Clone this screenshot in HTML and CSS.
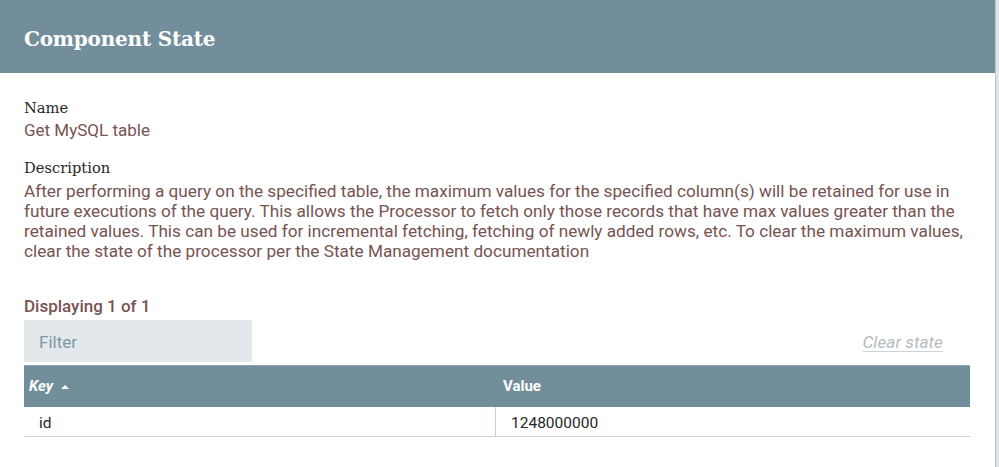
FILE: index.html
```html
<!DOCTYPE html>
<html>
<head>
<meta charset="utf-8">
<link rel="stylesheet" href="styles.css">
</head>
<body>
<div class="page">
  <div class="dialog">
    <div class="dialog-header">
      <span class="dialog-title">Component State</span>
    </div>
    <div class="dialog-content">
      <div class="setting">
        <div class="setting-name">Name</div>
        <div class="setting-value">Get MySQL table</div>
      </div>
      <div class="setting">
        <div class="setting-name">Description</div>
        <div class="setting-value desc">After performing a query on the specified table, the maximum values for the specified column(s) will be retained for use in future executions of the query. This allows the Processor to fetch only those records that have max values greater than the retained values. This can be used for incremental fetching, fetching of newly added rows, etc. To clear the maximum values, clear the state of the processor per the State Management documentation</div>
      </div>
      <div class="displaying">Displaying 1 of 1</div>
      <div class="toolbar">
        <div class="filter">Filter</div>
        <div class="clear-state">Clear state</div>
      </div>
      <div class="grid">
        <div class="grid-head">
          <div class="col col-key"><span class="sorted">Key</span><span class="sort-arrow"></span></div>
          <div class="col col-value">Value</div>
        </div>
        <div class="grid-row">
          <div class="cell cell-key">id</div>
          <div class="cell cell-value">1248000000</div>
        </div>
      </div>
    </div>
  </div>
  <div class="backdrop-edge"></div>
</div>
</body>
</html>
```
FILE: styles.css
```css
html, body {
  margin: 0;
  padding: 0;
  background: #ffffff;
}
.page {
  display: flex;
  width: 999px;
  height: 467px;
  overflow: hidden;
}
.dialog {
  width: 996px;
  flex: none;
  background: #ffffff;
  border-right: 1px solid #b9c4c9;
  box-sizing: border-box;
}
.backdrop-edge {
  flex: 1;
  background: #dfe4e7;
}
.dialog-header {
  height: 73px;
  background: #728e9b;
  padding-left: 24px;
  box-sizing: border-box;
  padding-top: 27px;
  line-height: 24px;
}
.dialog-title {
  font-family: "DejaVu Serif", serif;
  font-weight: bold;
  font-size: 20px;
  line-height: 24px;
  color: #ffffff;
  letter-spacing: -0.2px;
}
.dialog-content {
  padding: 25.5px 26px 0 24px;
}
.setting {
  margin-bottom: 19px;
}
.setting-name {
  font-family: "DejaVu Serif", serif;
  font-size: 14.7px;
  line-height: 18px;
  color: #262626;
}
.setting-value {
  font-family: Roboto, sans-serif;
  font-size: 17px;
  line-height: 20px;
  color: #775351;
  margin-top: 3.5px;
}
.setting-value.desc {
  font-size: 17.2px;
}
.displaying {
  margin-top: 35.4px;
  font-family: Roboto, sans-serif;
  font-weight: 500;
  font-size: 17px;
  line-height: 20px;
  color: #775351;
}
.toolbar {
  display: flex;
  justify-content: space-between;
  align-items: flex-start;
  margin-top: 4px;
}
.filter {
  width: 228px;
  height: 42px;
  background: #e3e8eb;
  box-sizing: border-box;
  padding-left: 15px;
  font-family: Roboto, sans-serif;
  font-size: 17px;
  line-height: 44px;
  color: #7e97a3;
  overflow: hidden;
}
.clear-state {
  font-family: Roboto, sans-serif;
  font-style: italic;
  font-size: 17.3px;
  line-height: 20px;
  color: #b6bcbf;
  text-decoration: underline;
  text-decoration-color: #c9d5da;
  text-underline-offset: 3px;
  margin-right: 26px;
  margin-top: 12px;
}
.grid {
  margin-top: 3px;
  width: 946px;
}
.grid-head {
  display: flex;
  height: 42px;
  background: #728e9b;
  border-top: 1px solid #8fa5af;
  box-sizing: border-box;
}
.col {
  font-family: Roboto, sans-serif;
  font-weight: bold;
  font-size: 15px;
  line-height: 41px;
  color: #ffffff;
}
.col-key {
  width: 472px;
  padding-left: 5px;
  box-sizing: border-box;
  font-style: italic;
  display: flex;
  align-items: center;
}
.sort-arrow {
  width: 0;
  height: 0;
  border-left: 4px solid transparent;
  border-right: 4px solid transparent;
  border-bottom: 4px solid #ffffff;
  margin-left: 8px;
  margin-top: 1px;
}
.col-value {
  padding-left: 7px;
}
.grid-row {
  display: flex;
  height: 29px;
  border-bottom: 1px solid #c7d2d7;
}
.cell {
  font-family: Roboto, sans-serif;
  font-size: 15.5px;
  line-height: 32px;
  height: 29px;
  color: #262626;
}
.cell-key {
  width: 472px;
  padding-left: 15px;
  box-sizing: border-box;
  border-right: 1px solid #c7d2d7;
}
.cell-value {
  padding-left: 15px;
}
```
